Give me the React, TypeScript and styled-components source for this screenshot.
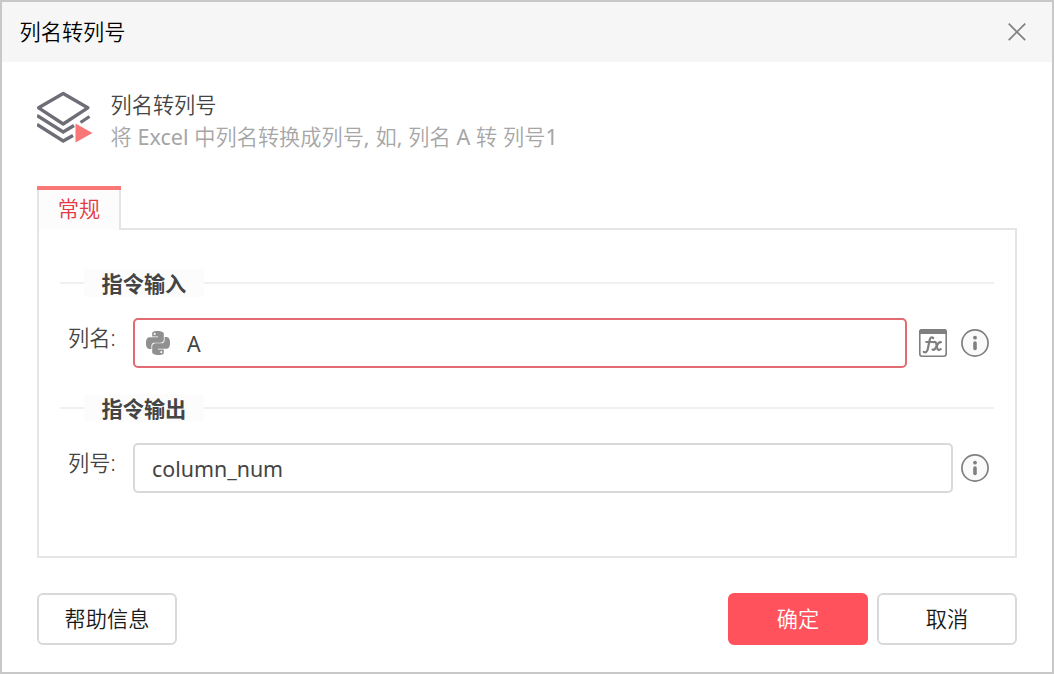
import React from 'react';
import styled, { createGlobalStyle } from 'styled-components';
import { SiPython } from 'react-icons/si';

const GlobalStyle = createGlobalStyle`
  *, *::before, *::after { box-sizing: border-box; }
  body {
    margin: 0;
    font-family: "Noto Sans", "Noto Sans CJK SC", sans-serif;
    font-size: 21.2px;
    line-height: 30px;
    color: #444;
  }
  svg { display: block; flex: none; }
  button { font: inherit; }
`;

const Dialog = styled.div`
  display: flex;
  flex-direction: column;
  width: 1054px;
  height: 674px;
  border: 2px solid #c8c8c8;
  background: #fff;
  white-space: nowrap;
`;

const TitleBar = styled.header`
  display: flex;
  align-items: center;
  justify-content: space-between;
  height: 60px;
  padding: 0 25px 0 17.5px;
  background: #f6f6f6;
  color: #000;
  font-weight: 350;
`;

const CloseButton = styled.button`
  display: flex;
  padding: 0;
  border: 0;
  background: none;
`;

const Intro = styled.section`
  display: flex;
  gap: 15.5px;
  height: 124px;
  padding: 26px 35px 0;
`;

const IntroText = styled.div`
  display: flex;
  flex-direction: column;
  padding-top: 2px;
`;

const Name = styled.div`
  height: 32px;
  font-weight: 350;
`;

const Description = styled.div`
  color: #a6a6a6;
  font-weight: 350;
  word-spacing: 0.2px;
`;

const Latin = styled.span`
  font-size: 21.6px;
  font-weight: 400;
`;

const Tabs = styled.nav`
  display: flex;
  height: 44px;
  margin: 0 35px -2px;
  z-index: 1;
`;

const Tab = styled.div`
  display: flex;
  flex-direction: column;
  align-items: center;
  width: 84px;
  background: linear-gradient(#e5e5e5, #e5e5e5) left / 2px 100% no-repeat,
    linear-gradient(#e5e5e5, #e5e5e5) right / 2px 100% no-repeat, #fcfcfc;
  border-top: 4px solid #f97777;
  padding-top: 4px;
  color: #e63946;
  font-weight: 350;
`;

const Panel = styled.main`
  height: 330px;
  margin: 0 35px;
  padding: 39px 21px 0;
  border: 2px solid #e5e5e5;
`;

const Legend = styled.div`
  display: flex;
  align-items: center;
  height: 28px;

  &::before, &::after {
    content: '';
    height: 2px;
    background: #f0f0f0;
  }
  &::before { width: 24px; }
  &::after { flex: 1; }
`;

const LegendText = styled.span`
  width: 120px;
  height: 28px;
  padding-left: 17.5px;
  background: #fcfcfc;
  font-weight: 700;
  line-height: 30px;
`;

const Row = styled.div`
  display: flex;
  align-items: center;
  height: 50px;
  margin: 21px 0 26px;
  padding: 0 5px 0 8px;
`;

const Label = styled.label`
  width: 65px;
  padding-bottom: 11px;
  font-weight: 350;
`;

const Field = styled.div<{ $invalid?: boolean }>`
  display: flex;
  flex: 1;
  align-items: center;
  gap: 17px;
  height: 50px;
  padding: 0 ${p => (p.$invalid ? '11px' : '17px')};
  border: 2px solid ${p => (p.$invalid ? '#e06c71' : '#d9d9d9')};
  border-radius: 5px;
  background: #fff;
`;

const Value = styled.span`
  padding-top: 2px;
  font-size: 21.4px;
`;

const FieldActions = styled.div`
  display: flex;
  gap: 14px;
  padding-left: 12px;
  & > :only-child { margin-left: -4px; }
`;

const Footer = styled.footer`
  display: flex;
  gap: 9px;
  padding: 35px 35px 0;
`;

const Button = styled.button<{ $primary?: boolean; $start?: boolean }>`
  width: 140px;
  height: 52px;
  padding: 0;
  margin-right: ${p => (p.$start ? 'auto' : '0')};
  border: 2px solid ${p => (p.$primary ? '#ff525c' : '#d9d9d9')};
  border-radius: 6px;
  background: ${p => (p.$primary ? '#ff525c' : '#fff')};
  color: ${p => (p.$primary ? '#fff' : '#1a1a1a')};
  font-weight: 350;
`;

const LayersIcon = () => (
  <svg width="58" height="56" viewBox="0 0 58 56" fill="none" stroke="#6f6e77" strokeWidth="3.3">
    <path d="M26.2 5.5 50.8 19.8 26.2 36 1.6 19.8Z" strokeLinejoin="round" />
    <path d="M0 27.5 26.2 44 37 37.5M43.5 34.5 52.5 28.5" />
    <path d="M0 36.5 26.2 53 36 47.5" />
    <path d="M38.5 35.5 55.5 45 38.5 54.5Z" fill="#f97777" stroke="none" />
  </svg>
);

const InfoIcon = () => (
  <svg width="28" height="28" viewBox="0 0 28 28">
    <circle cx="14" cy="14" r="13.1" fill="#fafafa" stroke="#808080" strokeWidth="1.7" />
    <circle cx="14" cy="8.7" r="1.9" fill="#808080" />
    <rect x="12.2" y="12.2" width="3.6" height="9" rx="1.7" fill="#808080" />
  </svg>
);

const FormulaIcon = () => (
  <svg width="28" height="28" viewBox="0 0 28 28" fill="none" stroke="#7f7f7f">
    <rect x=".8" y=".8" width="26.4" height="26.4" rx="2.5" fill="#fff" strokeWidth="1.6" />
    <path d="M0 5V3Q0 0 3 0H25Q28 0 28 3V5Z" fill="#7f7f7f" stroke="none" />
    <g strokeWidth="2.2" strokeLinecap="round" strokeLinejoin="round">
      <path d="M14.3 9.1C12.5 7.5 11.1 8.8 10.6 11.3L8.8 19.9C8.3 22.7 6.6 24.1 4.7 22.8" />
      <path d="M7.2 13H13.4" />
      <path d="M14.4 13.2C16.6 12.3 17 13.5 17.5 15.7L18.1 18.6C18.5 20.9 19.6 21.4 21.7 20.1" />
      <path d="M22 13.2C19.7 12.5 18.6 15.1 17.6 17.2C16.4 19.8 15.3 21.4 13.5 20.6" />
    </g>
  </svg>
);

export default function App() {
  return (
    <>
      <GlobalStyle />
      <Dialog>
        <TitleBar>
          <span>列名转列号</span>
          <CloseButton aria-label="关闭">
            <svg width="20" height="20" viewBox="0 0 20 20" stroke="#808080" strokeWidth="1.7">
              <path d="M1.7 1.7 18.2 18.2M18.2 1.7 1.7 18.2" />
            </svg>
          </CloseButton>
        </TitleBar>
        <Intro>
          <LayersIcon />
          <IntroText>
            <Name>列名转列号</Name>
            <Description>
              将 <Latin>Excel </Latin>中列名转换成列号<Latin>, </Latin>如<Latin>, </Latin>列名
              <Latin> A </Latin>转 列号<Latin>1</Latin>
            </Description>
          </IntroText>
        </Intro>
        <Tabs>
          <Tab>常规</Tab>
        </Tabs>
        <Panel>
          <Legend>
            <LegendText>指令输入</LegendText>
          </Legend>
          <Row>
            <Label>列名:</Label>
            <Field $invalid>
              <SiPython size={24} color="#909090" />
              <Value>A</Value>
            </Field>
            <FieldActions>
              <FormulaIcon />
              <InfoIcon />
            </FieldActions>
          </Row>
          <Legend>
            <LegendText>指令输出</LegendText>
          </Legend>
          <Row>
            <Label>列号:</Label>
            <Field>
              <Value>column_num</Value>
            </Field>
            <FieldActions>
              <InfoIcon />
            </FieldActions>
          </Row>
        </Panel>
        <Footer>
          <Button $start>帮助信息</Button>
          <Button $primary>确定</Button>
          <Button>取消</Button>
        </Footer>
      </Dialog>
    </>
  );
}
